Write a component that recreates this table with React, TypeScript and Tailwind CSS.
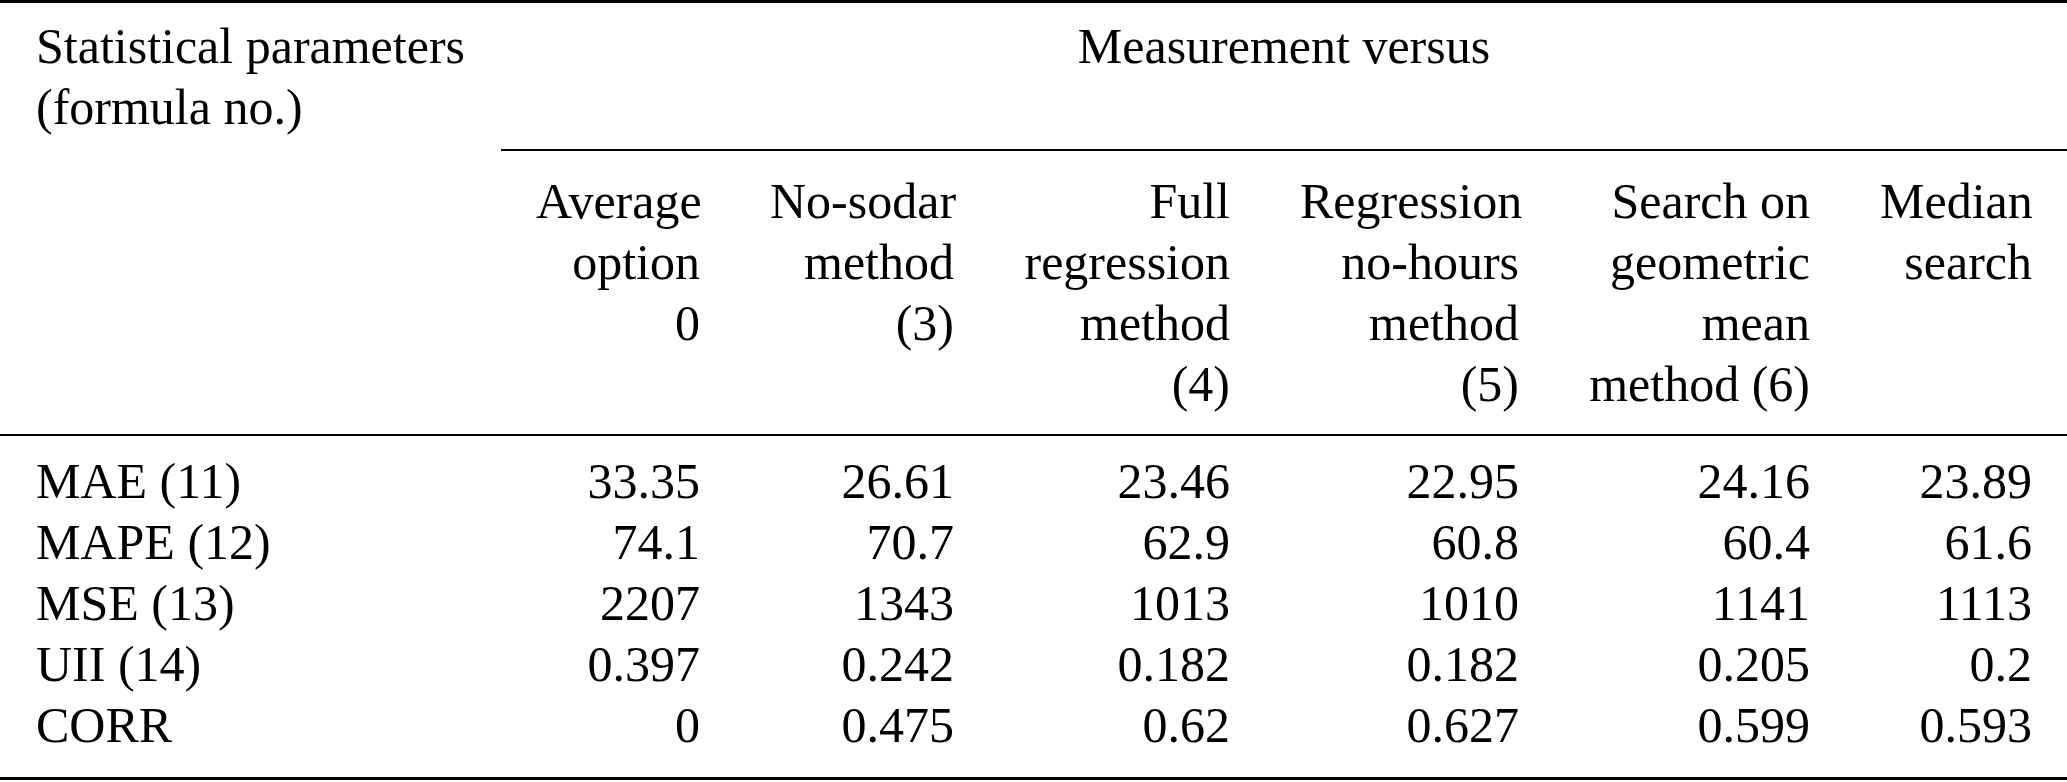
// Statistical comparison table (booktabs style)
const headers: string[][] = [
  ["Average", "option", "0"],
  ["No-sodar", "method", "(3)"],
  ["Full", "regression", "method", "(4)"],
  ["Regression", "no-hours", "method", "(5)"],
  ["Search on", "geometric", "mean", "method (6)"],
  ["Median", "search"],
];

const rows: { label: string; values: string[] }[] = [
  { label: "MAE (11)", values: ["33.35", "26.61", "23.46", "22.95", "24.16", "23.89"] },
  { label: "MAPE (12)", values: ["74.1", "70.7", "62.9", "60.8", "60.4", "61.6"] },
  { label: "MSE (13)", values: ["2207", "1343", "1013", "1010", "1141", "1113"] },
  { label: "UII (14)", values: ["0.397", "0.242", "0.182", "0.182", "0.205", "0.2"] },
  { label: "CORR", values: ["0", "0.475", "0.62", "0.627", "0.599", "0.593"] },
];

export default function App() {
  return (
    <div className="w-[2067px] h-[782px] bg-white text-black font-['Liberation_Serif','Times_New_Roman',serif] text-[50px] leading-[61px]">
      {/* top rule */}
      <div className="h-[3px] bg-black" />

      {/* spanning header */}
      <div className="grid grid-cols-[501px_1fr] h-[148px]">
        <div className="pl-[36px] pt-[13px] whitespace-nowrap">
          <div>Statistical parameters</div>
          <div>(formula no.)</div>
        </div>
        <div className="pt-[13px] text-center border-b-[2px] border-black">
          Measurement versus
        </div>
      </div>

      {/* column headers */}
      <div className="grid grid-cols-[501px_234px_254px_276px_289px_291px_222px] pt-[20px] pb-[19px] border-b-[2px] border-black">
        <div />
        {headers.map((lines, i) => (
          <div key={i} className="px-[35px] text-right whitespace-nowrap min-h-[244px]">
            {lines.map((l) => (
              <div key={l}>{l}</div>
            ))}
          </div>
        ))}
      </div>

      {/* body */}
      <div className="pt-[15px] pb-[21px]">
        {rows.map((r) => (
          <div
            key={r.label}
            className="grid grid-cols-[501px_234px_254px_276px_289px_291px_222px]"
          >
            <div className="pl-[36px] whitespace-nowrap">{r.label}</div>
            {r.values.map((v, j) => (
              <div key={j} className="px-[35px] text-right whitespace-nowrap">
                {v}
              </div>
            ))}
          </div>
        ))}
      </div>

      {/* bottom rule */}
      <div className="h-[3px] bg-black" />
    </div>
  );
}
